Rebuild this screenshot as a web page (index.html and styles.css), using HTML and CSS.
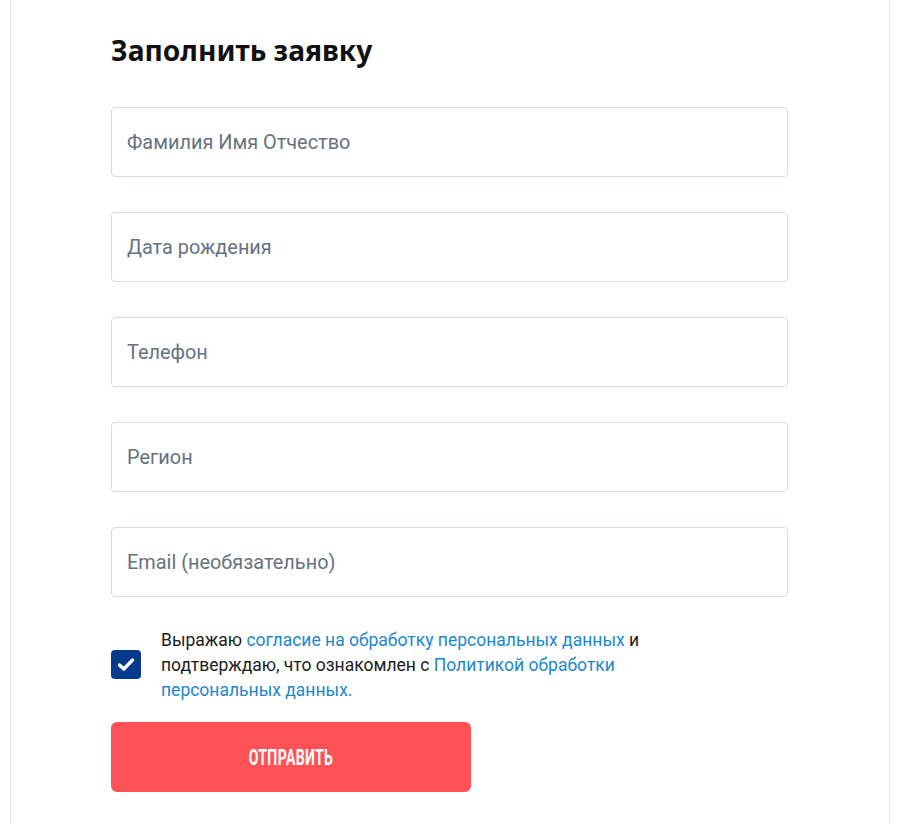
FILE: index.html
```html
<!DOCTYPE html>
<html lang="ru">
<head>
<meta charset="utf-8">
<link rel="stylesheet" href="styles.css">
</head>
<body>
<div class="card">
  <form class="form">
    <h1 class="title">Заполнить заявку</h1>
    <div class="fields">
      <input class="field" type="text" placeholder="Фамилия Имя Отчество">
      <input class="field" type="text" placeholder="Дата рождения">
      <input class="field" type="text" placeholder="Телефон">
      <input class="field" type="text" placeholder="Регион">
      <input class="field" type="text" placeholder="Email (необязательно)">
    </div>
    <label class="consent">
      <span class="check">
        <svg width="18" height="15" viewBox="0 0 18 15"><path d="M2.5 8 L6.8 12 L15.5 3" fill="none" stroke="#fff" stroke-width="3.4" stroke-linecap="round" stroke-linejoin="round"/></svg>
      </span>
      <span class="consent-text">Выражаю <a class="link" href="#">согласие на обработку персональных данных</a> и подтверждаю, что ознакомлен с <a class="link" href="#">Политикой обработки персональных данных.</a></span>
    </label>
    <button class="submit" type="button"><span class="submit-label">ОТПРАВИТЬ</span></button>
  </form>
</div>
</body>
</html>
```
FILE: styles.css
```css
html, body {
  margin: 0;
  padding: 0;
  background: #fff;
}
.card {
  margin-left: 10px;
  width: 878px;
  min-height: 824px;
  border-left: 1px solid #e4e4e4;
  border-right: 1px solid #e4e4e4;
  box-sizing: content-box;
}
.form {
  padding: 0 0 0 100px;
  width: 677px;
  display: flex;
  flex-direction: column;
}
.title {
  margin: 28px 0 0 0;
  font-family: "Noto Sans", sans-serif;
  font-weight: 700;
  font-size: 28.2px;
  line-height: 44px;
  color: #111;
}
.fields {
  margin-top: 35px;
  display: flex;
  flex-direction: column;
  gap: 35px;
}
.field {
  display: block;
  box-sizing: border-box;
  width: 677px;
  height: 70px;
  margin: 0;
  padding: 0 15px;
  border: 1px solid #d3dde4;
  border-radius: 4px;
  background: #fff;
  font-family: Roboto, sans-serif;
  font-size: 19.9px;
  color: #333;
  outline: none;
}
.field::placeholder {
  color: #66737f;
  opacity: 1;
}
.consent {
  margin-top: 31px;
  display: flex;
  align-items: center;
  gap: 20px;
}
.check {
  flex: none;
  width: 30px;
  height: 29px;
  border-radius: 4px;
  background: #073a8d;
  display: flex;
  align-items: center;
  justify-content: center;
  margin-top: -2px;
}
.consent-text {
  width: 500px;
  font-family: Roboto, sans-serif;
  font-size: 17.5px;
  line-height: 25px;
  color: #1c1c1c;
}
.link {
  color: #1a88cc;
  text-decoration: none;
}
.submit {
  margin-top: 19px;
  width: 360px;
  height: 70px;
  border: none;
  border-radius: 6px;
  background: #ff5257;
  color: #fff;
  display: flex;
  align-items: center;
  justify-content: center;
  padding: 0;
  cursor: pointer;
}
.submit-label {
  display: inline-block;
  font-family: Roboto, sans-serif;
  font-weight: 700;
  font-size: 22px;
  letter-spacing: 0.5px;
  transform: scaleX(0.64);
}
```
